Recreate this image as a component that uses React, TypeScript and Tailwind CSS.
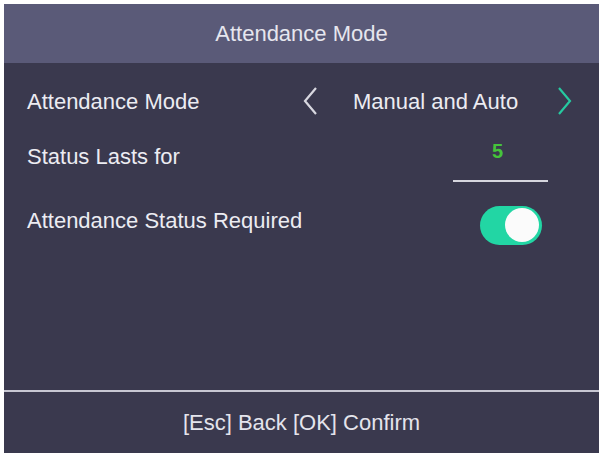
export default function App() {
  return (
    <div className="w-[604px] h-[453px] bg-white pl-[4px] pt-[4px] pr-[5px] overflow-hidden" style={{ fontFamily: '"Liberation Sans", Arial, sans-serif' }}>
      <div className="flex flex-col h-full bg-[#3a394e]">
        <div className="h-[59px] bg-[#5a5a78] flex items-center justify-center text-[22px] text-[#e6e6ee]">
          Attendance Mode
        </div>
        <div className="flex-1 px-[23px] pt-[23px] text-[22px] text-[#ececf2]">
          <div className="flex items-center h-[30px]">
            <span className="flex-1">Attendance Mode</span>
            <svg width="18" height="30" viewBox="0 0 18 30" className="mr-[34px]">
              <path d="M15 2 L4 15 L15 28" stroke="#d8d8e0" strokeWidth="2.2" fill="none" />
            </svg>
            <span className="w-[203px]">Manual and Auto</span>
            <svg width="18" height="30" viewBox="0 0 18 30" className="mr-[2px]">
              <path d="M3 2 L14 15 L3 28" stroke="#26c9a0" strokeWidth="2.2" fill="none" />
            </svg>
          </div>
          <div className="flex items-start mt-[26px] h-[50px]">
            <span className="flex-1 leading-[30px]">Status Lasts for</span>
            <div className="w-[95px] mr-[28px] flex flex-col items-center">
              <span className="text-[#45c43a] text-[20px] leading-[24px] mt-[-3px] ml-[-6px] font-bold">5</span>
              <div className="w-full h-[2px] bg-[#d6d6de] mt-[17px]" />
            </div>
          </div>
          <div className="flex items-center mt-[13px] h-[40px]">
            <span className="flex-1 mb-[10px]">Attendance Status Required</span>
            <div className="w-[62px] h-[39px] rounded-full bg-[#22d6a4] flex items-center justify-end pr-[3px] mr-[34px]">
              <div className="w-[34px] h-[34px] rounded-full bg-[#fbfbfb]" />
            </div>
          </div>
        </div>
        <div className="h-[2px] bg-[#c7c7d2]" />
        <div className="h-[61px] flex items-center justify-center text-[22px] text-[#e4e4ec]">
          [Esc] Back [OK] Confirm
        </div>
      </div>
    </div>
  )
}
